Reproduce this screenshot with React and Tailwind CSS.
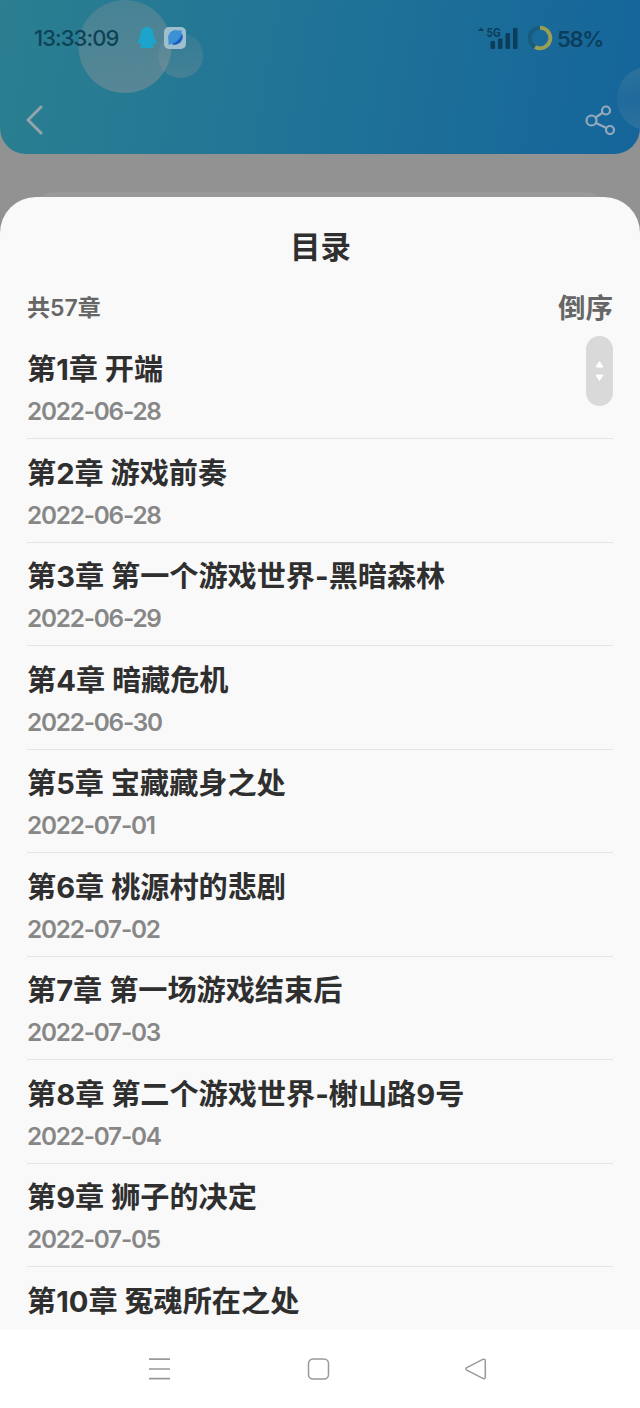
const CHAPTERS = [
  { no: 1, name: '开端', date: '2022-06-28' },
  { no: 2, name: '游戏前奏', date: '2022-06-28' },
  { no: 3, name: '第一个游戏世界-黑暗森林', date: '2022-06-29' },
  { no: 4, name: '暗藏危机', date: '2022-06-30' },
  { no: 5, name: '宝藏藏身之处', date: '2022-07-01' },
  { no: 6, name: '桃源村的悲剧', date: '2022-07-02' },
  { no: 7, name: '第一场游戏结束后', date: '2022-07-03' },
  { no: 8, name: '第二个游戏世界-榭山路9号', date: '2022-07-04' },
  { no: 9, name: '狮子的决定', date: '2022-07-05' },
  { no: 10, name: '冤魂所在之处' },
];

function Bubbles() {
  return (
    <svg className="absolute inset-0" width="640" height="154" viewBox="0 0 640 154">
      <defs>
        <linearGradient id="bubble" x1="0" y1="0" x2="0.3" y2="1">
          <stop offset="0" stopColor="#a09a9a" stopOpacity="0.24" />
          <stop offset="1" stopColor="#a09a9a" stopOpacity="0.4" />
        </linearGradient>
        <linearGradient id="bubbleSmall" x1="0" y1="0" x2="0.3" y2="1">
          <stop offset="0" stopColor="#a09a9a" stopOpacity="0.08" />
          <stop offset="1" stopColor="#a09a9a" stopOpacity="0.25" />
        </linearGradient>
        <linearGradient id="bubbleEdge" x1="0" y1="0" x2="0" y2="1">
          <stop offset="0" stopColor="#8fa0a8" stopOpacity="0.2" />
          <stop offset="0.5" stopColor="#8fa0a8" stopOpacity="0.08" />
          <stop offset="1" stopColor="#8fa0a8" stopOpacity="0.2" />
        </linearGradient>
      </defs>
      <circle cx="125" cy="46.5" r="46.5" fill="url(#bubble)" />
      <circle cx="180.5" cy="55.5" r="22.5" fill="url(#bubbleSmall)" />
      <circle cx="649" cy="98.5" r="32" fill="url(#bubbleEdge)" />
    </svg>
  );
}

function StatusBar() {
  return (
    <div className="relative flex h-[76px] items-center pl-[34px] pr-[37px] text-[#0d4257]">
      <span className="w-[85px] whitespace-nowrap text-[22px] font-medium tracking-[-0.95px]">13:33:09</span>
      {/* notification icons */}
      <svg className="ml-[18px]" width="20" height="22" viewBox="0 0 20 22" fill="#1da4cc">
        <path d="M10 0C6 0 3.500 3 3.500 7v2C2 11 .5 14 .8 16.500c.2 1.200 1.500.6 2.400-.9.3 1.100.8 2 1.600 2.800-1.300.6-1.800 1.400-1.300 2.600h13c.5-1.200 0-2-1.300-2.600.8-.8 1.300-1.700 1.600-2.800.9 1.500 2.200 2.100 2.400.9.3-2.500-1.200-5.500-2.700-7.500V7c0-4-2.500-7-6.500-7Z" />
      </svg>
      <svg className="ml-[7px]" width="22" height="22" viewBox="0 0 22 22">
        <rect width="22" height="22" rx="5" fill="#9ebfce" />
        <circle cx="11.5" cy="10.5" r="7.2" fill="#3289d4" />
        <path d="M4.500 18V10.500A7 7 0 0 1 11.500 3.500H18C17 10.500 11 16 4.500 18Z" fill="#3c90d6" />
        <path d="M18 6.500c2.500 6-4 13-10.500 10.800C13 15.500 17 11.500 18 6.500Z" fill="#1d58bd" />
      </svg>
      <svg className="ml-auto" width="40" height="24" viewBox="0 0 40 24" fill="#0b3e5b">
        <path d="M0 5 3 1.500 6 5Z" />
        <path d="M0 6.500h6L3 9.500Z" fill="#236f88" />
        <text x="8.500" y="10.700" fontSize="12.500" fontWeight="700" textLength="14" lengthAdjust="spacingAndGlyphs" fontFamily="Roboto, sans-serif">5G</text>
        <rect x="12.500" y="15" width="4.500" height="8" rx="1" />
        <rect x="20" y="12.500" width="4.500" height="10.500" rx="1" />
        <rect x="27.500" y="7" width="4.500" height="16" rx="1" />
        <rect x="35" y="2" width="4.500" height="21" rx="1" />
      </svg>
      <svg className="ml-[9px]" width="26" height="26" viewBox="0 0 26 26" fill="none" strokeWidth="4">
        <circle cx="13" cy="13" r="10.300" stroke="#195c7e" />
        <path d="M13 2.700A10.300 10.300 0 1 1 8 22" stroke="#989e56" />
      </svg>
      <span className="ml-[4px] mt-[2px] w-[46px] whitespace-nowrap text-[22px] font-semibold tracking-[-1.3px] text-[#0b3e5b]">58%</span>
    </div>
  );
}

function Header() {
  return (
    <header className="relative h-[154px] shrink-0 overflow-hidden rounded-b-[26px] bg-[linear-gradient(100deg,#2b7f90_0%,#207397_50%,#15659b_100%)]">
      <Bubbles />
      <StatusBar />
      <div className="relative flex h-[88px] items-center justify-between pl-[26px] pr-[25px]">
        <svg width="17" height="30" viewBox="0 0 17 30" fill="none" stroke="#93a4aa" strokeWidth="3" strokeLinecap="round" strokeLinejoin="round">
          <path d="M15 2 2 15l13 13" />
        </svg>
        <svg width="30" height="30" viewBox="0 0 30 30" fill="none" stroke="#93aabc" strokeWidth="2.200">
          <circle cx="6.500" cy="15.500" r="5" />
          <circle cx="21" cy="5.500" r="4" />
          <circle cx="25" cy="25" r="4" />
          <path d="m10.500 12.500 7.500-5M11 18l10.500 5" />
        </svg>
      </div>
    </header>
  );
}

function ChapterRow({ no, name, date }) {
  return (
    <li className="h-[103.5px] shrink-0 border-b border-[#e4e4e4] pt-[12.5px]">
      <div className="h-[44px] whitespace-nowrap text-[29.15px] leading-[44px] font-bold text-[#2f2f2f]">
        第{no}章 {name}
      </div>
      {date && (
        <div className="h-[38px] whitespace-nowrap text-[24.3px] leading-[38px] font-semibold tracking-[-1.2px] text-[#878787]">
          {date}
        </div>
      )}
    </li>
  );
}

function NavBar() {
  return (
    <nav className="flex h-[78px] shrink-0 items-center bg-white pl-[148px]">
      <svg width="23" height="23" viewBox="0 0 23 23" stroke="#999" strokeWidth="1.700">
        <path d="M1 1.200h21M1 11h21M1 20.700h21" />
      </svg>
      <svg className="ml-[136px]" width="23" height="23" viewBox="0 0 23 23" fill="none" stroke="#999" strokeWidth="1.500">
        <rect x="1.500" y="1" width="20" height="20" rx="4.500" />
      </svg>
      <svg className="ml-[134px]" width="23" height="23" viewBox="0 0 23 23" fill="none" stroke="#999" strokeWidth="1.500" strokeLinejoin="round">
        <path d="M2.800 9.700 18.800 1.400q2.500-.9 2.500 1.400v16.200q0 2.300-2.500 1.400L2.800 12.100q-1.800-1.200 0-2.400Z" />
      </svg>
    </nav>
  );
}

export default function App() {
  return (
    <div className="flex h-[1408px] w-[640px] flex-col overflow-hidden bg-[#929292] font-[Inter,'Noto_Sans_CJK_SC',sans-serif]">
      <Header />
      {/* page card, mostly hidden behind the sheet */}
      <div className="mx-[27px] mt-[38px] -mb-[35px] h-[40px] shrink-0 rounded-t-[28px] bg-[#999]" />
      <main className="relative flex h-[1133px] shrink-0 flex-col overflow-hidden rounded-t-[36px] bg-[#f9f9f9] px-[27px]">
        <h1 className="h-[99px] shrink-0 pl-px text-center text-[30.5px] leading-[99px] font-bold text-[#2f2f2f]">目录</h1>
        <div className="-mt-[7px] flex h-[40px] shrink-0 items-center justify-between font-semibold text-[#666]">
          <span className="-mt-px text-[23px]">共57章</span>
          <span className="text-[27.5px]">倒序</span>
        </div>
        <ul className="mt-[6.9px] flex flex-col">
          {CHAPTERS.map((c) => (
            <ChapterRow key={c.no} {...c} />
          ))}
        </ul>
        {/* scroll handle floats over the list */}
        <div className="absolute top-[139px] right-[27px] flex h-[70px] w-[27px] items-center justify-center rounded-full bg-[#d9d9d9]">
          <svg width="9" height="22" viewBox="0 0 9 22" fill="#fff" stroke="#fff" strokeLinejoin="round">
            <path d="M4.500 1.500 8 7H1ZM1 15h7l-3.500 5.500Z" />
          </svg>
        </div>
      </main>
      <NavBar />
    </div>
  );
}
